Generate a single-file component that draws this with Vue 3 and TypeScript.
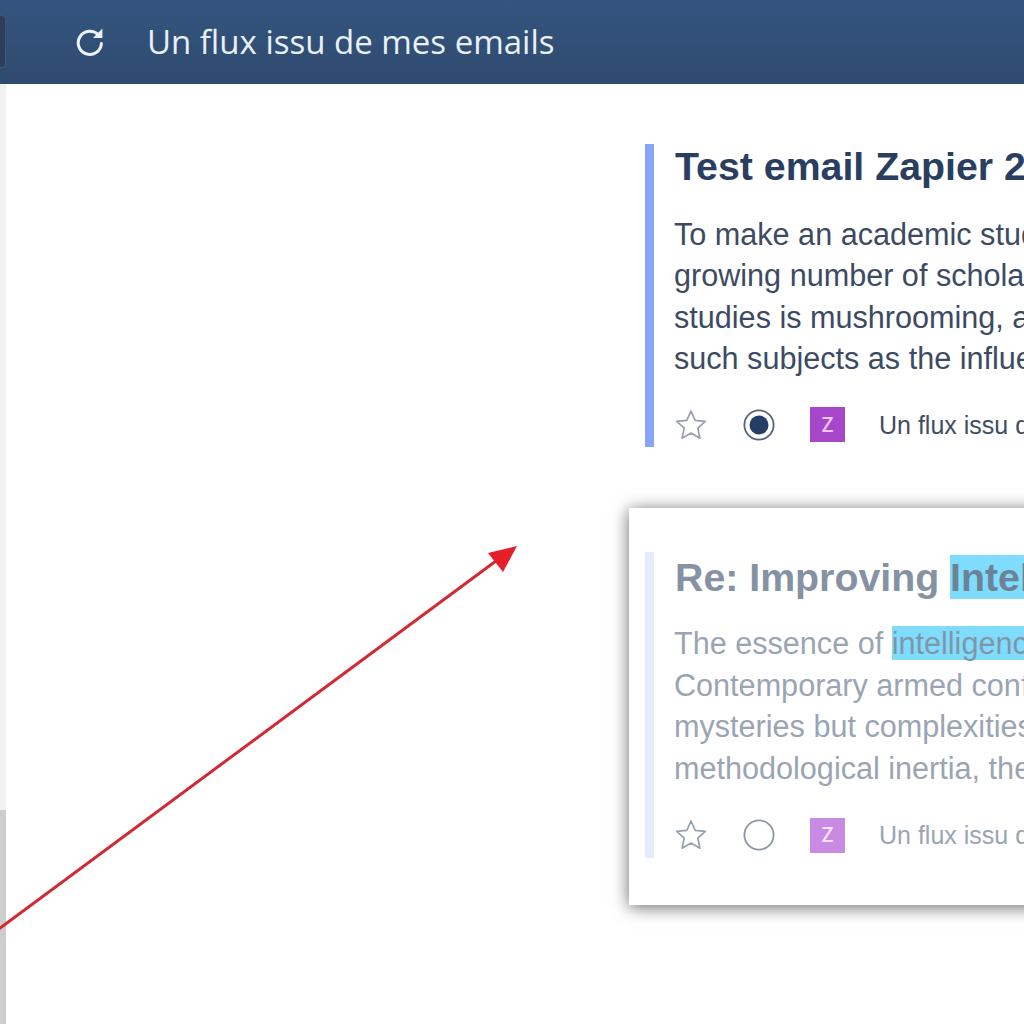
<script setup lang="ts">
interface Mail {
  title: string;
  mark?: string;
  lines: { text: string; mark?: string }[];
  read: boolean;
}
const mails: Mail[] = [
  {
    title: "Test email Zapier 2",
    read: false,
    lines: [
      { text: "To make an academic study of" },
      { text: "growing number of scholars" },
      { text: "studies is mushrooming, and" },
      { text: "such subjects as the influence" },
    ],
  },
  {
    title: "Re: Improving ",
    mark: "Intelligence",
    read: true,
    lines: [
      { text: "The essence of ", mark: "intelligence" },
      { text: "Contemporary armed conflicts" },
      { text: "mysteries but complexities" },
      { text: "methodological inertia, the" },
    ],
  },
];
</script>

<template>
  <div class="page">
    <header class="topbar">
      <span class="edge-btn"></span>
      <svg class="refresh" viewBox="0 0 32 32" width="32" height="32" aria-hidden="true">
        <path d="M24.6 10.2A11.6 11.6 0 1 0 27.4 18.6" fill="none" stroke="#eef3f8" stroke-width="3" stroke-linecap="round" />
        <path d="M28.4 3.6V13H19z" fill="#eef3f8" />
      </svg>
      <h1 class="feed-title">Un flux issu de mes emails</h1>
    </header>
    <div class="body">
      <aside class="rail"><div class="rail-thumb"></div></aside>
      <main class="feed">
        <article v-for="(m, i) in mails" :key="i" class="card" :class="{ read: m.read }">
          <div class="item">
            <h2 class="title">{{ m.title }}<mark v-if="m.mark">{{ m.mark }}</mark></h2>
            <div class="excerpt">
              <div v-for="(l, j) in m.lines" :key="j" class="line">{{ l.text }}<mark v-if="l.mark">{{ l.mark }}</mark></div>
            </div>
            <div class="meta">
              <svg class="star" viewBox="0 0 34 34" width="34" height="34" aria-hidden="true">
                <path d="M17 3l4.2 9.3 10.1 1.1-7.5 6.8 2.1 10-8.9-5.1-8.9 5.1 2.1-10-7.5-6.8 10.1-1.1z" fill="none" stroke="#97a0ae" stroke-width="1.7" stroke-linejoin="round" />
              </svg>
              <svg class="radio" viewBox="0 0 32 32" width="32" height="32" aria-hidden="true">
                <circle cx="16" cy="16" r="14.6" fill="none" :stroke="m.read ? '#8d97a6' : '#56657a'" stroke-width="1.8" />
                <circle v-if="!m.read" cx="16" cy="16" r="9.5" fill="#243e66" />
              </svg>
              <span class="badge">Z</span>
              <span class="source">Un flux issu de mes emails</span>
            </div>
          </div>
        </article>
      </main>
    </div>
    <svg class="arrow" viewBox="0 0 1024 1024" width="1024" height="1024" aria-hidden="true">
      <line x1="-4" y1="931" x2="500" y2="558" stroke="#d02a34" stroke-width="3" />
      <polygon points="517,546 488,553 503,572" fill="#e61e28" />
    </svg>
  </div>
</template>

<style scoped>
.page {
  position: relative;
  width: 1024px;
  height: 1024px;
  overflow: hidden;
  background: #fff;
  display: flex;
  flex-direction: column;
  font-family: "Liberation Sans", Arial, sans-serif;
}
.topbar {
  flex: none;
  height: 84px;
  display: flex;
  align-items: center;
  background: linear-gradient(#33557f, #304a6f);
}
.edge-btn {
  flex: none;
  width: 6px;
  height: 53px;
  margin-top: -2px;
  background: #2b3f5d;
  border: 1px solid #46566e;
  border-left: 0;
  border-radius: 0 4px 4px 0;
  box-sizing: border-box;
}
.refresh {
  flex: none;
  margin-left: 68px;
  margin-top: -3px;
}
.feed-title {
  margin: -2px 0 0 41px;
  font-family: "Open Sans", sans-serif;
  font-weight: 400;
  font-size: 33px;
  color: #e9f0f6;
  white-space: nowrap;
}
.body {
  flex: 1;
  min-height: 0;
  display: flex;
}
.rail {
  flex: none;
  width: 6px;
  background: #f1f1f1;
  display: flex;
  flex-direction: column;
  justify-content: flex-end;
}
.rail-thumb {
  height: 214px;
  background: #cdcdcd;
}
.feed {
  flex: 1;
  padding: 60px 0 0 623px;
  display: flex;
  flex-direction: column;
  gap: 61px;
  min-width: 0;
}
.card {
  flex: none;
  width: 700px;
  padding-left: 16px;
}
.card.read {
  background: #fff;
  padding-top: 44px;
  padding-bottom: 47px;
  box-shadow: 0 2px 16px rgba(0, 0, 0, 0.6);
}
.item {
  box-sizing: border-box;
  border-left: 9px solid #86a5f6;
  padding-left: 21px;
  height: 303px;
  display: flex;
  flex-direction: column;
}
.read .item {
  border-left-color: #e5ecfd;
  height: 306px;
  padding-top: 3px;
}
.title {
  margin: 0;
  font-size: 39.3px;
  line-height: 44px;
  font-weight: 700;
  color: #2a3f5f;
  white-space: nowrap;
}
.read .title {
  color: #8492a4;
}
mark {
  color: inherit;
  background: #7fdcfd;
}
.read .line mark {
  color: #7f96a8;
}
.read .title mark {
  color: #6d8296;
}
.excerpt {
  margin: 25.6px 0 0 -1px;
}
.read .excerpt {
  margin-top: 24px;
}
.line {
  font-size: 30.6px;
  line-height: 41.5px;
  color: #3c4b63;
  white-space: nowrap;
}
.read .line {
  color: #9aa5b4;
}
.meta {
  margin-top: 27.4px;
  display: flex;
  align-items: center;
  height: 36px;
}
.read .meta {
  margin-top: 28px;
}
.star {
  flex: none;
  margin-left: -1px;
}
.radio {
  flex: none;
  margin-left: 35px;
}
.badge {
  flex: none;
  width: 35px;
  height: 35px;
  margin-left: 35px;
  display: flex;
  align-items: center;
  justify-content: center;
  background: #a646c8;
  color: #f2c4fa;
  font-family: Roboto, sans-serif;
  font-weight: 500;
  font-size: 20px;
}
.read .badge {
  background: #c98ae3;
  color: #f6e2fb;
}
.source {
  margin: 1px 0 0 34px;
  font-size: 25px;
  color: #3f4e63;
  white-space: nowrap;
}
.read .source {
  margin-top: 0;
  color: #9aa5b4;
}
.arrow {
  position: absolute;
  top: 0;
  left: 0;
  pointer-events: none;
}
</style>
